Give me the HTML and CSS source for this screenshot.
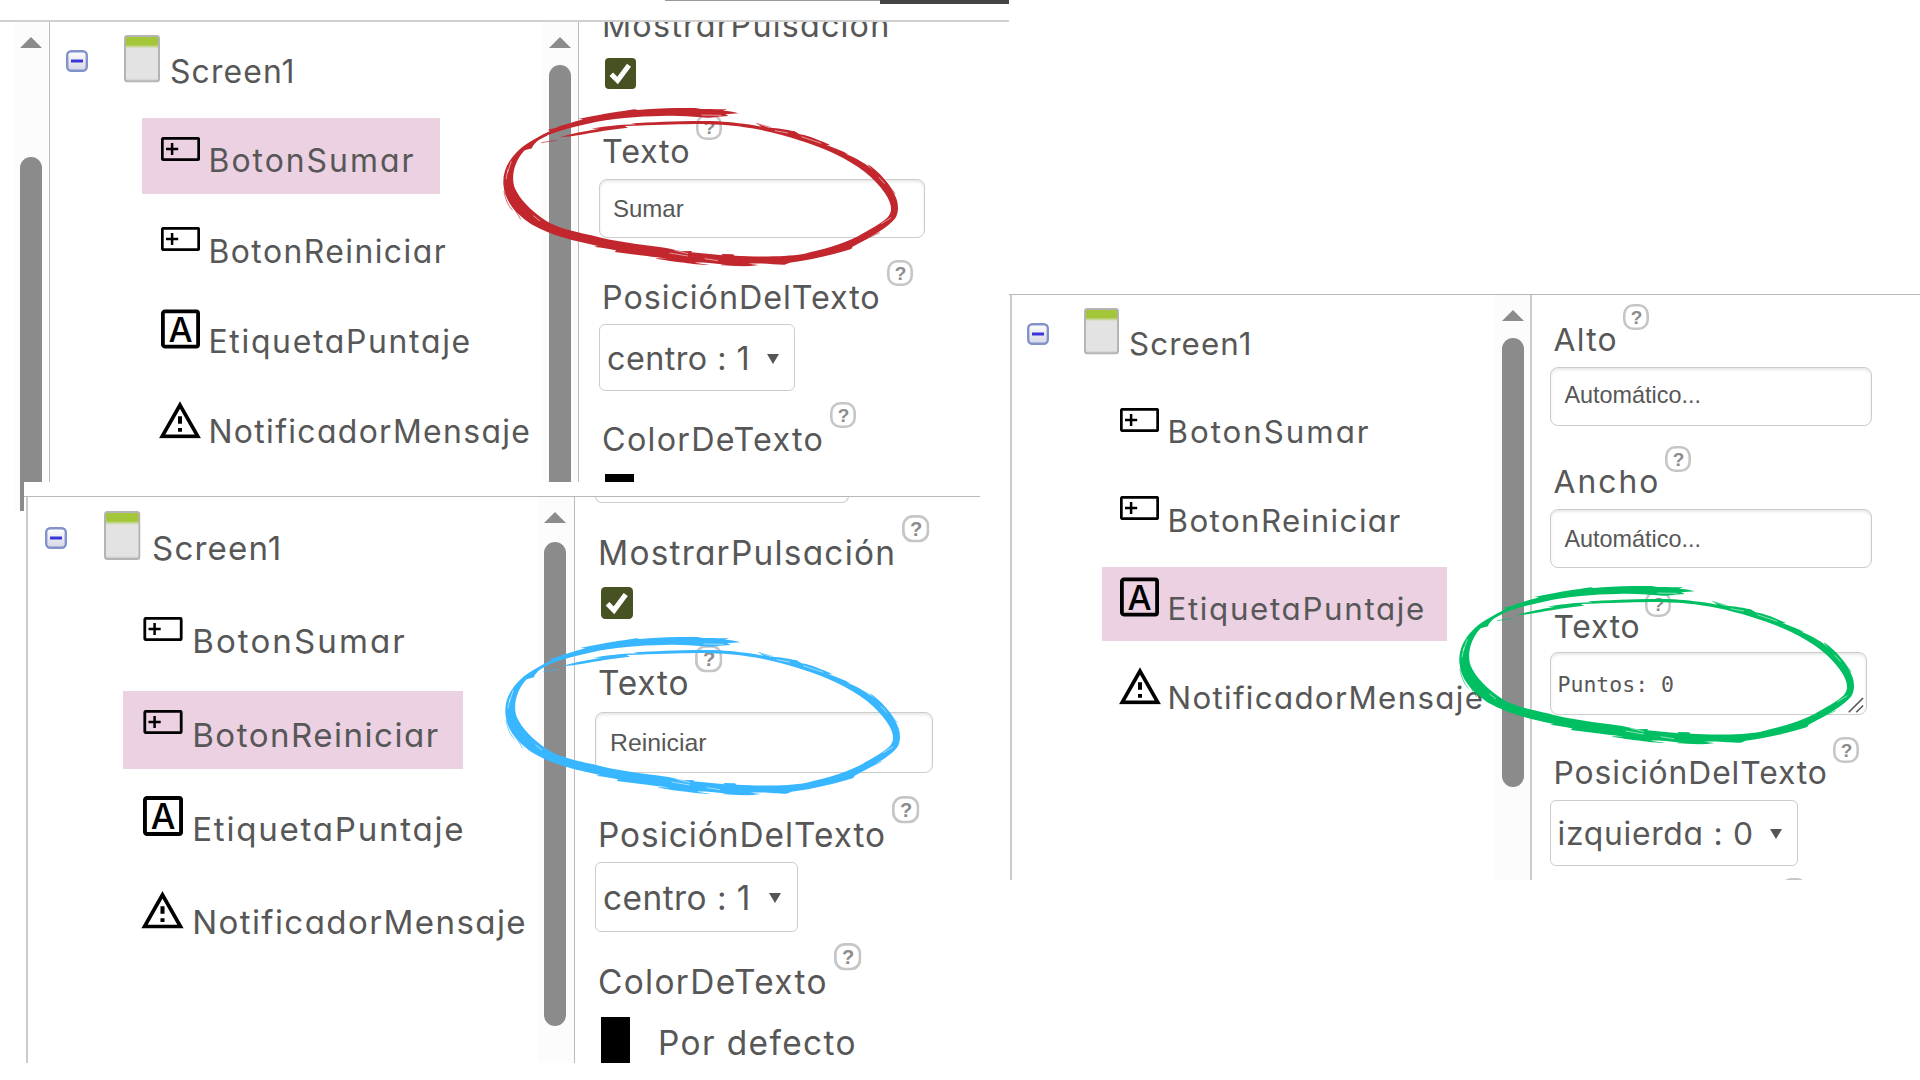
FILE: index.html
```html
<!DOCTYPE html>
<html lang="es">
<head>
<meta charset="utf-8">
<title>Componentes y propiedades</title>
<link rel="stylesheet" href="styles.css">
</head>
<body>
<svg class="defs" width="0" height="0">
  <defs>
    <linearGradient id="minus-fill" x1="0" y1="0" x2="0" y2="1"><stop offset="0" stop-color="#fff"/><stop offset="1" stop-color="#d4d6e2"/></linearGradient>
    <linearGradient id="screen-fill" x1="0" y1="0" x2="0" y2="1"><stop offset="0" stop-color="#a4c639"/><stop offset=".19" stop-color="#a4c639"/><stop offset=".27" stop-color="#e3e3e3"/><stop offset=".93" stop-color="#e3e3e3"/><stop offset="1" stop-color="#c4c4c4"/></linearGradient>
  </defs>
  <symbol id="minus" viewBox="0 0 22 22">
    <rect x="1.2" y="1.2" width="19.6" height="19.6" rx="4" fill="url(#minus-fill)" stroke="#8492cc" stroke-width="2.4"/>
    <path d="M5 11H17" stroke="#3a35d8" stroke-width="3"/>
  </symbol>
  <symbol id="screen" viewBox="0 0 36 48" preserveAspectRatio="none">
    <rect x="1" y="1" width="34" height="46" rx="2.5" fill="url(#screen-fill)" stroke="#b4b4b4" stroke-width="2"/>
  </symbol>
  <symbol id="button" viewBox="0 0 39 24">
    <rect x="1.3" y="1.3" width="36.4" height="21.4" rx="1.2" fill="none" stroke="#000" stroke-width="2.8"/>
    <path d="M5 12H17.2M11.1 6V18" stroke="#000" stroke-width="2.5"/>
  </symbol>
  <symbol id="label" viewBox="0 0 39 39">
    <rect x="1.9" y="1.9" width="35.2" height="35.2" rx="2" fill="none" stroke="#000" stroke-width="3.8"/>
    <text x="19.5" y="32" text-anchor="middle" class="letter-a">A</text>
  </symbol>
  <symbol id="notifier" viewBox="0 0 42 37">
    <path d="M21 3.8L38.8 35.1H3.2Z" fill="none" stroke="#000" stroke-width="3.7"/>
    <path d="M21 15V22.5M21 26.8V30.6" stroke="#000" stroke-width="4"/>
  </symbol>
  <symbol id="help" viewBox="0 0 26 26">
    <rect x="1.3" y="1.3" width="23.4" height="23.4" rx="9" fill="#fff" stroke="#c6c6c6" stroke-width="2.6"/>
    <text x="13.5" y="19.6" text-anchor="middle" class="question">?</text>
  </symbol>
  <symbol id="check" viewBox="0 0 31 31">
    <rect width="31" height="31" rx="4" fill="#465222"/>
    <path d="M6.3 16.2L12.6 22.5L24 7.3" fill="none" stroke="#fff" stroke-width="5"/>
  </symbol>
  <symbol id="caret" viewBox="0 0 12 10"><path d="M0 0H12L6 10Z" fill="#555"/></symbol>
  <symbol id="arrow-up" viewBox="0 0 22 11"><path d="M11 0L22 11H0Z" fill="#8b8b8b"/></symbol>
  <symbol id="scribble" viewBox="45 441 1186 476">
    <path fill="currentColor" d="M752 457C735 452 722 450 705 449L718 445C690 445 660 443 640 444L622 441C560 440 500 442 450 447L440 445C400 451 340 460 300 468L270 474L286 475C250 485 225 492 205 500L180 506L186 510C160 522 120 545 100 560C60 595 44 630 46 670C50 720 80 755 130 790C190 825 260 840 330 855L318 857C340 860 370 865 385 868L380 873C430 880 470 884 540 893L505 892C530 898 560 903 590 905C610 908 640 912 665 912L620 905C660 904 680 908 700 910C740 918 780 917 812 912L780 908C830 905 850 911 890 911L905 905C970 897 1040 880 1090 864L1094 857C1150 828 1200 800 1222 772C1232 755 1232 735 1226 715C1210 670 1170 630 1140 610L1155 628C1140 612 1110 594 1070 577L1082 580C1062 569 1040 561 1015 552L1028 553C1000 540 960 523 935 520L920 511C890 504 860 500 845 501L808 489L820 497C770 488 730 484 690 481C600 478 500 484 430 487L445 490C390 491 340 498 310 503L335 503C300 508 240 520 215 529L250 526C300 517 350 508 420 500L410 495C500 492 560 490 620 489C700 489 760 495 820 507C900 524 980 550 1040 578C1110 612 1160 650 1190 695C1212 728 1215 750 1200 768C1180 788 1140 808 1110 826C1060 852 1000 866 950 878C900 888 800 888 740 884L735 880L700 879L704 883L610 874L612 870L580 871L535 861C450 850 380 842 310 823C260 812 210 802 175 780C130 750 95 715 80 680C68 645 80 600 110 568L132 562L134 556C150 532 170 530 180 522C220 506 260 496 300 488C370 472 450 466 520 465C570 463 600 466 640 469C655 471 670 470 690 467L722 465L712 460Z"/>
    <g fill="none" stroke="currentColor" stroke-width="2">
      <path d="M48 690C52 715 62 738 74 748M66 722L98 775M160 545L205 538M805 487L850 500M1140 612L1176 645M1198 668L1222 698M1080 858L1175 815M505 893L600 900M700 912L790 910"/>
    </g>
    <g fill="none" stroke="#fff" stroke-width="1.6">
      <path d="M58 636L70 600M54 655L60 625M136 764L156 780M545 876L600 885M560 868L600 878M650 893L690 899M860 509L900 516M940 527L1000 547M1172 648L1190 668M1210 770L1180 788M640 462L700 463"/>
    </g>
  </symbol>
</svg>

<main class="canvas">
  <section class="panel panel-sumar">
    <div class="strip"><span class="strip-light"></span><span class="strip-dark"></span></div>
    <div class="body">
      <div class="scroll scroll-outer"><svg class="arrow"><use href="#arrow-up"/></svg><div class="thumb"></div></div>
      <div class="tree">
        <div class="root"><svg class="minus"><use href="#minus"/></svg><svg class="screen"><use href="#screen"/></svg><span class="t-screen">Screen1</span></div>
        <div class="item selected"><svg class="i-button"><use href="#button"/></svg><span class="t-sumar">BotonSumar</span></div>
        <div class="item"><svg class="i-button"><use href="#button"/></svg><span class="t-reiniciar">BotonReiniciar</span></div>
        <div class="item"><svg class="i-label"><use href="#label"/></svg><span class="t-etiqueta">EtiquetaPuntaje</span></div>
        <div class="item"><svg class="i-notifier"><use href="#notifier"/></svg><span class="t-notificador">NotificadorMensaje</span></div>
      </div>
      <div class="scroll"><svg class="arrow"><use href="#arrow-up"/></svg><div class="thumb"></div></div>
      <div class="props">
        <div class="name name-cut"><span class="t-mostrar">MostrarPulsación</span></div>
        <svg class="check"><use href="#check"/></svg>
        <div class="name"><span class="t-texto">Texto</span><svg class="help"><use href="#help"/></svg></div>
        <div class="input">Sumar</div>
        <div class="name"><span class="t-posicion">PosiciónDelTexto</span><svg class="help"><use href="#help"/></svg></div>
        <div class="select"><span class="t-centro">centro : 1</span><svg class="caret"><use href="#caret"/></svg></div>
        <div class="name"><span class="t-color">ColorDeTexto</span><svg class="help"><use href="#help"/></svg></div>
        <div class="swatch"></div>
      </div>
    </div>
  </section>

  <section class="panel panel-reiniciar">
    <div class="body">
      <div class="tree">
        <div class="root"><svg class="minus"><use href="#minus"/></svg><svg class="screen"><use href="#screen"/></svg><span class="t-screen">Screen1</span></div>
        <div class="item"><svg class="i-button"><use href="#button"/></svg><span class="t-sumar">BotonSumar</span></div>
        <div class="item selected"><svg class="i-button"><use href="#button"/></svg><span class="t-reiniciar">BotonReiniciar</span></div>
        <div class="item"><svg class="i-label"><use href="#label"/></svg><span class="t-etiqueta">EtiquetaPuntaje</span></div>
        <div class="item"><svg class="i-notifier"><use href="#notifier"/></svg><span class="t-notificador">NotificadorMensaje</span></div>
      </div>
      <div class="scroll"><svg class="arrow"><use href="#arrow-up"/></svg><div class="thumb"></div></div>
      <div class="props">
        <div class="select-end"></div>
        <div class="name"><span class="t-mostrar">MostrarPulsación</span><svg class="help"><use href="#help"/></svg></div>
        <svg class="check"><use href="#check"/></svg>
        <div class="name"><span class="t-texto">Texto</span><svg class="help"><use href="#help"/></svg></div>
        <div class="input">Reiniciar</div>
        <div class="name"><span class="t-posicion">PosiciónDelTexto</span><svg class="help"><use href="#help"/></svg></div>
        <div class="select"><span class="t-centro">centro : 1</span><svg class="caret"><use href="#caret"/></svg></div>
        <div class="name"><span class="t-color">ColorDeTexto</span><svg class="help"><use href="#help"/></svg></div>
        <div class="color"><div class="swatch"></div><span class="t-defecto">Por defecto</span></div>
      </div>
    </div>
  </section>

  <section class="panel panel-etiqueta">
    <div class="body">
      <div class="tree">
        <div class="root"><svg class="minus"><use href="#minus"/></svg><svg class="screen"><use href="#screen"/></svg><span class="t-screen">Screen1</span></div>
        <div class="item"><svg class="i-button"><use href="#button"/></svg><span class="t-sumar">BotonSumar</span></div>
        <div class="item"><svg class="i-button"><use href="#button"/></svg><span class="t-reiniciar">BotonReiniciar</span></div>
        <div class="item selected"><svg class="i-label"><use href="#label"/></svg><span class="t-etiqueta">EtiquetaPuntaje</span></div>
        <div class="item"><svg class="i-notifier"><use href="#notifier"/></svg><span class="t-notificador">NotificadorMensaje</span></div>
      </div>
      <div class="scroll"><svg class="arrow"><use href="#arrow-up"/></svg><div class="thumb"></div></div>
      <div class="props">
        <div class="name"><span class="t-alto">Alto</span><svg class="help"><use href="#help"/></svg></div>
        <div class="input">Automático...</div>
        <div class="name"><span class="t-ancho">Ancho</span><svg class="help"><use href="#help"/></svg></div>
        <div class="input">Automático...</div>
        <div class="name"><span class="t-texto">Texto</span><svg class="help"><use href="#help"/></svg></div>
        <div class="textarea">Puntos: 0<svg class="grip" viewBox="0 0 17 17"><path d="M.8 16.2L16 1M8.8 16.2L16 9" stroke="#555" stroke-width="1.7"/></svg></div>
        <div class="name"><span class="t-posicion">PosiciónDelTexto</span><svg class="help"><use href="#help"/></svg></div>
        <div class="select"><span class="t-izquierda">izquierda : 0</span><svg class="caret"><use href="#caret"/></svg></div>
        <div class="name name-end"><svg class="help"><use href="#help"/></svg></div>
      </div>
    </div>
  </section>

  <svg class="mark mark-red"><use href="#scribble"/></svg>
  <svg class="mark mark-blue"><use href="#scribble"/></svg>
  <svg class="mark mark-green"><use href="#scribble"/></svg>
</main>
</body>
</html>
```
FILE: styles.css
```css
* { box-sizing: border-box; }
body { margin: 0; background: #fff; color: #575757; font-family: Inter, "Noto Sans", sans-serif; font-feature-settings: "cv11"; }
svg { display: block; flex: none; overflow: visible; }
.defs { position: absolute; }
.canvas { position: relative; width: 1920px; height: 1080px; overflow: hidden; }

/* Overlapping windows on the canvas */
.panel { position: absolute; overflow: hidden; display: flex; flex-direction: column; background: #fff; }
.body { flex: 1; display: flex; min-height: 0; }

.panel-sumar {
  left: 0; top: 0; width: 1009px; height: 511px;
  --tree-font: 31.9px; --prop-font: 32.3px;
  --root-h: 96px; --minus-x: 16px; --minus-y: 28px; --screen-gap: 36px; --screen-w: 36px; --screen-h: 47.5px; --screen-y: 13px; --root-text-x: 10px; --root-text-y: 29.7px;
  --item-x: 92px; --item-h: 75.7px; --item-gap: 14.6px; --item-w: 297.5px; --item-pad: 11px; --slot-pad: 18.5px; --slot: 39px; --text-gap: 9px;
  --name-pad: 18px; --help: 26px; --help-gap: 6px; --props-x: 19.5px;
}
.panel-reiniciar {
  left: 24px; top: 482px; width: 985px; height: 581.3px; padding-top: 14px;
  --tree-font: 33.1px; --prop-font: 33.4px;
  --root-h: 101px; --minus-x: 17px; --minus-y: 31px; --screen-gap: 37px; --screen-w: 36.5px; --screen-h: 49px; --screen-y: 15.2px; --root-text-x: 11.5px; --root-text-y: 32.4px;
  --item-x: 95px; --item-h: 78.3px; --item-gap: 15.3px; --item-w: 339.8px; --item-pad: 10.5px; --slot-pad: 19.5px; --slot: 40px; --text-gap: 9.7px;
  --name-pad: 18.8px; --help: 27.4px; --help-gap: 6px; --props-x: 19.5px;
}
.panel-etiqueta {
  left: 1009px; top: 294px; width: 911px; height: 586px;
  --tree-font: 31.3px; --prop-font: 31.8px;
  --root-h: 95px; --minus-x: 14.8px; --minus-y: 27.5px; --screen-gap: 35.3px; --screen-w: 35px; --screen-h: 46.5px; --screen-y: 13.2px; --root-text-x: 10px; --root-text-y: 29.3px;
  --item-x: 90px; --item-h: 74.3px; --item-gap: 14.3px; --item-w: 345.4px; --item-pad: 10.2px; --slot-pad: 18px; --slot: 39px; --text-gap: 8.5px;
  --name-pad: 15.9px; --help: 26px; --help-gap: 5px; --props-x: 18px;
}
.panel-sumar .body { border-top: 2px solid #d0d0d0; }
.panel-reiniciar .body { position: relative; padding-left: 3px; }
.panel-reiniciar .body::before { content: ""; position: absolute; left: 0; top: 0; width: 956px; height: 1.4px; background: #b8b8b8; }
.panel-etiqueta .body { border-top: 1.5px solid #b8b8b8; padding-left: 1px; }

.strip { height: 20px; display: flex; justify-content: flex-end; align-items: flex-start; }
.strip-light { width: 215px; height: 1px; background: #999; }
.strip-dark { width: 129px; height: 4px; background: #444; }

/* Scrollbars */
.scroll { flex: none; display: flex; flex-direction: column; align-items: center; background: #fcfcfc; }
.arrow { width: 22px; height: 11px; margin-top: 14.5px; }
.thumb { width: 22px; background: #8b8b8b; border-radius: 11px; }
.scroll-outer { width: 34px; margin-left: 14px; padding-right: 1px; }
.scroll-outer .thumb { flex: 1; margin-top: 109.5px; border-radius: 11px 11px 0 0; }
.tree + .scroll { width: 36px; padding-right: 1px; border-right: 1.5px solid #bbb; }
.panel-sumar .tree + .scroll { width: 37px; }
.panel-sumar .tree + .scroll .thumb { flex: 1; margin-top: 17.5px; border-radius: 11px 11px 0 0; }
.panel-reiniciar .tree + .scroll { width: 38px; padding-right: 1px; }
.panel-reiniciar .arrow { margin-top: 16px; }
.panel-reiniciar .thumb { height: 484px; margin-top: 19px; }
.panel-etiqueta .tree + .scroll { width: 37px; border-right: 2px solid #ccc; padding-right: 0; }
.panel-etiqueta .thumb { height: 449px; margin-top: 17.5px; }

/* Component tree */
.tree { flex: none; border-left: 1.5px solid #bbb; font-size: var(--tree-font); line-height: 40px; white-space: nowrap; }
.panel-sumar .tree { width: 493px; margin-left: 1px; }
.panel-reiniciar .tree { width: 511px; border-left: 2px solid #ccc; margin-left: -1px; }
.panel-etiqueta .tree { width: 485px; border-left: 2px solid #ccc; }
.root { display: flex; align-items: flex-start; height: var(--root-h); padding-left: var(--minus-x); }
.minus { width: 22px; height: 22px; margin-top: var(--minus-y); }
.screen { width: var(--screen-w); height: var(--screen-h); margin: var(--screen-y) var(--root-text-x) 0 var(--screen-gap); }
.root span { margin-top: var(--root-text-y); }
.item { display: flex; align-items: center; width: max-content; height: var(--item-h); margin: 0 0 var(--item-gap) var(--item-x); padding: var(--item-pad) 0 0 var(--slot-pad); }
.item span { margin-left: var(--text-gap); }
.selected { width: var(--item-w); background: #ebd1e2; }
.i-button { width: var(--slot); height: 24px; margin-bottom: 25px; }
.i-label { width: var(--slot); height: 40px; margin-bottom: 25px; }
.i-notifier { width: calc(var(--slot) + 3px); height: 37.5px; margin: 0 -1.5px 25px; }

/* Properties: each row starts where its label or control starts */
.props { display: grid; align-items: start; justify-items: start; align-content: start; padding-left: var(--props-x); font-size: var(--prop-font); line-height: 40px; white-space: nowrap; }
.panel-sumar .props { grid-template-rows: 36.3px 54.5px 66.5px 80px 64.7px 77.3px 72.7px 8px; overflow: hidden; width: 400px; }
.panel-reiniciar .props { grid-template-rows: 17.5px 73.5px 56.7px 68.3px 83.3px 67px 79.7px 75px 46.3px; }
.panel-etiqueta .props { grid-template-rows: 63.5px 78.8px 63.9px 80.5px 62.5px 83.8px 63.8px 78px 2px; padding-top: 8px; }
.name { display: flex; align-items: flex-start; padding: 1px 0 0 3.5px; }
.name span { margin-top: var(--name-pad); }
.name-cut { margin-top: -35.4px; }
.help { width: var(--help); height: var(--help); margin-left: var(--help-gap); }
.name-end { padding: 0 0 0 226px; }
.check { width: 31px; height: 31px; margin-left: 6.5px; }
.panel-reiniciar .check { width: 32px; height: 32px; }
.input { width: 326px; height: 59px; padding-left: 13.5px; border: 1.5px solid #ccc; border-radius: 8px; box-shadow: inset 0 2px 3px #e8e8e8; background: #fff; font: 24px/57px "Liberation Sans", sans-serif; }
.panel-reiniciar .input { width: 338px; height: 61.5px; padding-left: 14.5px; font-size: 24.8px; line-height: 59px; }
.panel-etiqueta .input { width: 321.5px; font-size: 23.4px; line-height: 55px; }
.panel-etiqueta .props > .input:nth-child(4) { line-height: 58px; }
.textarea { display: flex; justify-content: space-between; align-items: flex-end; width: 317px; height: 63px; padding: 0 2px 1.5px 6.5px; border: 1.5px solid #ccc; border-radius: 8px; box-shadow: inset 0 2px 3px #e8e8e8; background: #fff; font: 21.5px/57px "DejaVu Sans Mono", monospace; }
.grip { width: 16px; height: 16px; }
.select { display: flex; justify-content: space-between; align-items: center; width: 196.5px; height: 67.5px; padding: 2px 15px 0 7.5px; border: 1.5px solid #ccc; border-radius: 6px; }
.select .caret { width: 12px; height: 10px; }
.panel-reiniciar .select { width: 203px; height: 69.5px; padding-right: 16px; }
.panel-etiqueta .select { width: 248px; height: 66px; padding: 2px 15.5px 0 6.5px; }
.select-end { width: 254px; height: 6.5px; border: 1.5px solid #ccc; border-top: 0; border-radius: 0 0 8px 8px; }
.swatch { width: 29.5px; height: 46.3px; background: #000; margin-left: 6px; }
.color { display: flex; }
.color span { margin: 6.5px 0 0 28px; }

.letter-a { font: 500 34px Inter, sans-serif; fill: #000; }
.question { font: bold 19px "Liberation Sans", sans-serif; fill: #8c8c8c; }

/* Tracking per label */
.t-screen { letter-spacing: .035em; }
.t-sumar { letter-spacing: .063em; }
.t-reiniciar { letter-spacing: .045em; }
.t-etiqueta { letter-spacing: .053em; }
.t-notificador { letter-spacing: .042em; }
.t-mostrar { letter-spacing: .037em; }
.t-texto { letter-spacing: .025em; }
.t-posicion { letter-spacing: .029em; }
.t-color, .t-alto { letter-spacing: .04em; }
.t-centro { letter-spacing: .014em; }
.t-defecto { letter-spacing: .042em; }
.t-ancho { letter-spacing: .063em; }
.t-izquierda { letter-spacing: .023em; }

/* Hand-drawn circles over the windows */
.mark { position: absolute; width: 395.3px; height: 158.7px; }
.mark-red { left: 503px; top: 108px; color: #c1272d; }
.mark-blue { left: 505px; top: 637px; color: #38b6ff; }
.mark-green { left: 1459px; top: 586px; color: #00bf63; }
```
